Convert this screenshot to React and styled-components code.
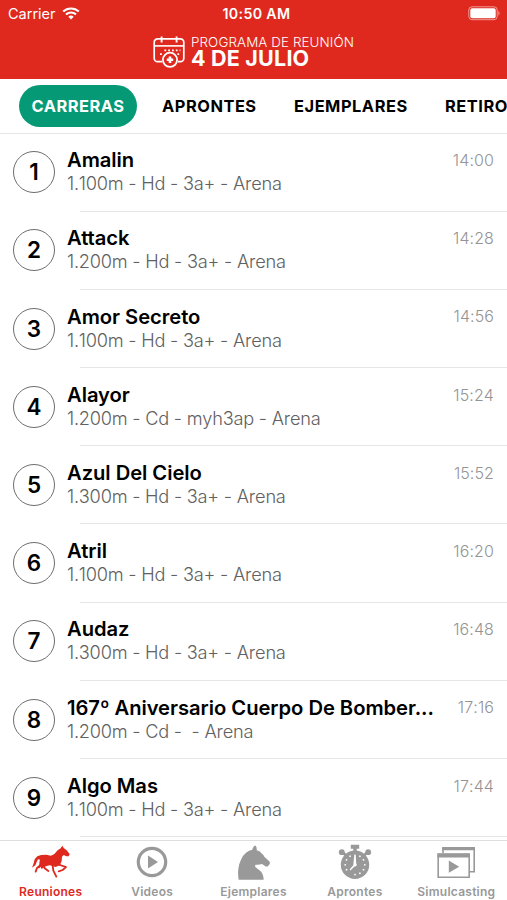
import styled, { createGlobalStyle, css } from 'styled-components';

const GlobalStyle = createGlobalStyle`
  * {
    box-sizing: border-box;
  }
  body {
    margin: 0;
    background: #fff;
    font-family: Inter, 'Liberation Sans', sans-serif;
    overflow: hidden;
  }
`;

const races = [
  { name: 'Amalin', info: '1.100m - Hd - 3a+ - Arena', time: '14:00' },
  { name: 'Attack', info: '1.200m - Hd - 3a+ - Arena', time: '14:28' },
  { name: 'Amor Secreto', info: '1.100m - Hd - 3a+ - Arena', time: '14:56' },
  { name: 'Alayor', info: '1.200m - Cd - myh3ap - Arena', time: '15:24' },
  { name: 'Azul Del Cielo', info: '1.300m - Hd - 3a+ - Arena', time: '15:52' },
  { name: 'Atril', info: '1.100m - Hd - 3a+ - Arena', time: '16:20' },
  { name: 'Audaz', info: '1.300m - Hd - 3a+ - Arena', time: '16:48' },
  {
    name: '167º Aniversario Cuerpo De Bomber...',
    info: '1.200m - Cd -  - Arena',
    time: '17:16',
  },
  { name: 'Algo Mas', info: '1.100m - Hd - 3a+ - Arena', time: '17:44' },
];

const sections = ['CARRERAS', 'APRONTES', 'EJEMPLARES', 'RETIRO'];

const WifiIcon = () => (
  <svg width="18" height="13" viewBox="0 0 18 13" fill="none">
    <path d="M1.2 4.6a11.2 11.2 0 0 1 15.6 0" stroke="#fff" strokeWidth="2.1" />
    <path d="M4 7.5a7.1 7.1 0 0 1 10 0" stroke="#fff" strokeWidth="2" />
    <path d="M9 12.4 6.3 9.7a3.9 3.9 0 0 1 5.4 0z" fill="#fff" />
  </svg>
);

const BatteryIcon = () => (
  <svg width="33" height="15" viewBox="0 0 33 15" fill="none">
    <rect x=".8" y=".8" width="28.4" height="12.9" rx="3.2" stroke="#f09a93" strokeWidth="1" />
    <rect x="2.3" y="2.3" width="25.4" height="9.9" rx="1.8" fill="#fff" />
    <path d="M30.4 5v4.6c1.6-.6 1.6-4 0-4.6z" fill="#f09a93" />
  </svg>
);

const CalendarIcon = () => (
  <svg width="32" height="32" viewBox="0 0 32 32" fill="none" stroke="#fff">
    <path
      d="M9 25.6H4.6a3.4 3.4 0 0 1-3.4-3.4V6.3a3.4 3.4 0 0 1 3.4-3.4h22.8a3.4 3.4 0 0 1 3.4 3.4v15.9a3.4 3.4 0 0 1-3.4 3.4H25"
      strokeWidth="1.7"
    />
    <path d="M1.2 9.9h29.6" strokeWidth="1.6" />
    <path d="M8.6.6v6M23.6.6v6" strokeWidth="1.9" />
    <path d="M11.4 14.4h16M7 18.2h3.6M24.4 18.2h3" strokeWidth="1.7" strokeDasharray="1.8 2" />
    <circle cx="17" cy="23.8" r="7.1" fill="#df291f" strokeWidth="1.8" />
    <path d="M17 20.6v6.4M13.8 23.8h6.4" strokeWidth="2.6" />
  </svg>
);

const HorseIcon = () => (
  <svg width="46" height="40" viewBox="0 0 138 120">
    <path
      d="M103 11l4 7 9 7 9 11-3 7-7 0-8-4-5 5-1 13-5 12-13 6-18-5-12 3-12 8-6-10-1-10 2-8-6-1-4 8-4 10-10 7 5-13 3-12 8-9 11-4 16-1 14 3 10-5 10-11 9-6z"
      fill="currentColor"
    />
    <g fill="none" stroke="currentColor" strokeWidth="5.5" strokeLinejoin="round" strokeLinecap="round">
      <path d="M92 68l22 7-10 9-12 4" />
      <path d="M74 70l2 16 9 18" />
      <path d="M42 66l-15 12-4 11" />
      <path d="M48 70l2 9 11 8" />
      <path d="M39 64l-6 12" />
    </g>
  </svg>
);

const PlayIcon = () => (
  <svg width="32" height="32" viewBox="0 0 32 32" fill="none">
    <circle cx="16" cy="16" r="13.7" stroke="currentColor" strokeWidth="3.2" />
    <path d="M12 9.5v13l10-6.5z" fill="currentColor" />
  </svg>
);

const KnightIcon = () => (
  <svg width="34" height="35" viewBox="111 32 102 105" fill="currentColor">
    <path d="M163 34l4 0 3 6 0 8q11 3 16 10 5 3 7 9l14 13q4 4 2 9l-5 7q-6 2-10-2l-8-5q-9 3-19 2-3 3-1 7l16 13q8 8 9 25h-75q-3-17-1-32 2-17 8-28 5-13 15-21 9-8 19-9 1-6 6-12z" />
  </svg>
);

const minuteMarks = [30, 60, 90, 120, 150, 180, 240, 270, 300, 330];

const StopwatchIcon = () => (
  <svg width="34" height="36" viewBox="0 0 34 36">
    <g fill="currentColor">
      <path d="M12.8.8h8.4v4h-2.5v3h-3.4v-3h-2.5z" />
      <circle cx="17" cy="20.8" r="14.2" />
      <circle cx="3.8" cy="8.2" r="2.9" />
      <circle cx="30.2" cy="8.2" r="2.9" />
      <path d="M4.8 6.6l4.4 4.2-2 2-4.3-4.2zM29.2 6.6l-4.4 4.2 2 2 4.3-4.2z" />
    </g>
    <g fill="#fff">
      {minuteMarks.map(angle => (
        <circle key={angle} cx="17" cy="11" r=".9" transform={`rotate(${angle} 17 20.8)`} />
      ))}
      <path d="M16.3 10.4h1.4l.5 9.2a1.7 1.7 0 0 1-1.8 2.8l-3.9 4-.9-.8 3.7-4.4z" />
    </g>
  </svg>
);

const SimulcastIcon = () => (
  <svg width="39" height="33" viewBox="0 0 39 33" fill="none" stroke="currentColor">
    <path d="M6 7V1.7h31.2v24h-5" strokeWidth="1.6" />
    <path d="M5.2 2.8h32.8" strokeWidth="2.8" />
    <path d="M1.2 8h31v23.3h-31z" strokeWidth="1.6" />
    <path d="M.4 9.6h32.6" strokeWidth="3.8" />
    <path d="M11.8 14.6v12.2l10.4-6.1z" fill="currentColor" stroke="none" />
  </svg>
);

const tabs = [
  { label: 'Reuniones', icon: <HorseIcon />, active: true },
  { label: 'Videos', icon: <PlayIcon /> },
  { label: 'Ejemplares', icon: <KnightIcon /> },
  { label: 'Aprontes', icon: <StopwatchIcon /> },
  { label: 'Simulcasting', icon: <SimulcastIcon /> },
];

const App = () => {
  return (
    <>
      <GlobalStyle />
      <Screen>
        <Header>
          <StatusBar>
            <Carrier>
              Carrier
              <WifiIcon />
            </Carrier>
            <Clock>10:50 AM</Clock>
            <Battery>
              <BatteryIcon />
            </Battery>
          </StatusBar>
          <TitleBar>
            <CalendarIcon />
            <TitleText>
              <Subtitle>PROGRAMA DE REUNIÓN</Subtitle>
              <Title>4 DE JULIO</Title>
            </TitleText>
          </TitleBar>
        </Header>
        <Sections>
          {sections.map((section, i) => (
            <Section key={section} $active={i === 0}>
              {section}
            </Section>
          ))}
        </Sections>
        <RaceList>
          {races.map((race, i) => (
            <Race key={race.name}>
              <Number>{i + 1}</Number>
              <RaceBody>
                <Name>{race.name}</Name>
                <Info>{race.info}</Info>
              </RaceBody>
              <Time>{race.time}</Time>
            </Race>
          ))}
        </RaceList>
        <TabBar>
          {tabs.map(tab => (
            <Tab key={tab.label} $active={tab.active}>
              <TabIcon>{tab.icon}</TabIcon>
              <TabLabel>{tab.label}</TabLabel>
            </Tab>
          ))}
        </TabBar>
      </Screen>
    </>
  );
};

export default App;

const Screen = styled.div`
  width: 507px;
  height: 900px;
  display: flex;
  flex-direction: column;
  background: #fff;
  overflow: hidden;
`;

const Header = styled.header`
  flex: none;
  height: 79px;
  background: #df291f;
  color: #fff;
`;

const StatusBar = styled.div`
  display: grid;
  grid-template-columns: 1fr auto 1fr;
  align-items: center;
  height: 27px;
  padding: 0 6px 0 8px;
  font-size: 14.5px;
`;

const Carrier = styled.div`
  display: flex;
  align-items: center;
  gap: 6px;
  font-weight: 400;
`;

const Clock = styled.div`
  padding-left: 4px;
  font-size: 14.2px;
  font-weight: 600;
  letter-spacing: 0.35px;
`;

const Battery = styled.div`
  display: flex;
  justify-content: flex-end;
`;

const TitleBar = styled.div`
  display: flex;
  justify-content: center;
  gap: 6px;
  padding-top: 9px;
`;

const TitleText = styled.div`
  margin-top: -1px;
`;

const Subtitle = styled.div`
  font-size: 13.4px;
  line-height: 14px;
  font-weight: 350;
  letter-spacing: 0.1px;
`;

const Title = styled.div`
  font-size: 21.5px;
  line-height: 19px;
  font-weight: 700;
  letter-spacing: 0.2px;
`;

const Sections = styled.nav`
  flex: none;
  display: flex;
  align-items: center;
  height: 54.5px;
  padding-left: 19px;
  gap: 12.4px;
  border-bottom: 1px solid #e6e6e6;
`;

const Section = styled.div`
  flex: none;
  height: 42px;
  line-height: 42px;
  padding: 0 12.5px;
  border-radius: 21px;
  font-size: 16.4px;
  font-weight: 700;
  letter-spacing: 0.53px;
  color: #000;
  ${({ $active }) =>
    $active &&
    css`
      background: #059a75;
      color: #fff;
    `}
`;

const RaceList = styled.div`
  flex: 1;
  min-height: 0;
  overflow: hidden;
`;

const Race = styled.div`
  display: flex;
  height: 78.2px;
  padding: 0 13px;
  background: linear-gradient(#e6e6e6, #e6e6e6) 80px 100% / 100% 1px no-repeat;
`;

const Number = styled.div`
  flex: none;
  width: 42px;
  height: 42px;
  margin-top: 17.8px;
  border: 1px solid #6e6e6e;
  border-radius: 50%;
  text-align: center;
  line-height: 39px;
  font-size: 22.5px;
  font-weight: 600;
`;

const RaceBody = styled.div`
  flex: 1;
  margin: 14.7px 0 0 12px;
  white-space: pre;
`;

const Name = styled.div`
  font-size: 20.2px;
  line-height: 24px;
  font-weight: 600;
  letter-spacing: -0.04px;
  color: #000;
`;

const Info = styled.div`
  font-size: 18.2px;
  line-height: 23px;
  font-weight: 350;
  font-kerning: none;
  letter-spacing: -0.23px;
  color: #616161;
`;

const Time = styled.div`
  margin-top: 16.6px;
  font-size: 16px;
  line-height: 20px;
  font-weight: 350;
  font-kerning: none;
  letter-spacing: 0.1px;
  color: #949494;
`;

const TabBar = styled.footer`
  flex: none;
  display: flex;
  height: 60.5px;
  border-top: 1.5px solid #dedede;
`;

const Tab = styled.div`
  flex: 1;
  display: flex;
  flex-direction: column;
  align-items: center;
  color: ${({ $active }) => ($active ? '#df291f' : '#999')};
`;

const TabIcon = styled.div`
  height: 43.5px;
  padding-bottom: 0.5px;
  display: flex;
  align-items: center;
`;

const TabLabel = styled.div`
  font-size: 12px;
  line-height: 15px;
  font-weight: 600;
  letter-spacing: 0.25px;
`;
